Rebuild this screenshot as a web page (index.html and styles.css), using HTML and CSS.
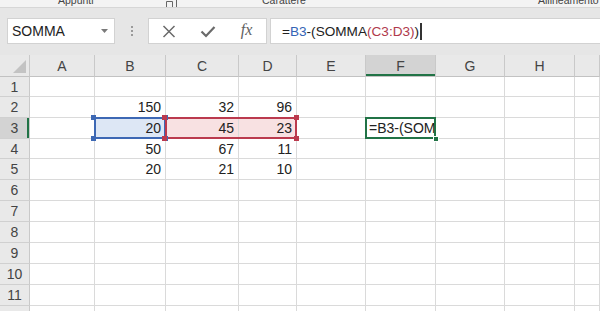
FILE: index.html
```html
<!DOCTYPE html>
<html>
<head>
    <meta charset="UTF-8">
    <title>Foglio1</title>
    <link rel="stylesheet" href="styles.css">
</head>
<body>

<div class="ribbon-groups">
    <span class="group-label g-clip">Appunti</span>
    <span class="launcher">
        <svg width="14" height="8" viewBox="0 0 14 8"><path d="M1.5 8V1.5H7.5V8M11.5 0V8" fill="none" stroke="#666" stroke-width="1"/></svg>
    </span>
    <span class="group-label g-font">Carattere</span>
    <span class="group-label g-align">Allineamento</span>
</div>

<div class="formula-bar">
    <div class="name-box">
        <span>SOMMA</span>
        <svg width="7" height="4" viewBox="0 0 7 4"><polygon points="0,0 7,0 3.5,4" fill="#7a7a7a"/></svg>
    </div>
    <div class="grip"><i></i><i></i><i></i></div>
    <div class="fx-buttons">
        <span class="fx-btn">
            <svg width="14" height="13" viewBox="0 0 14 13"><path d="M1.5 1L12.5 12M12.5 1L1.5 12" stroke="#6a6a6a" stroke-width="1.5" fill="none"/></svg>
        </span>
        <span class="fx-btn">
            <svg width="16" height="13" viewBox="0 0 16 13"><polyline points="1.5,6.5 6,11 14.5,2" stroke="#6a6a6a" stroke-width="2.2" fill="none"/></svg>
        </span>
        <span class="fx-btn fx">fx</span>
    </div>
    <div class="formula">=<span class="ref-b">B3</span>-(SOMMA<span class="ref-r">(C3:D3)</span>)<span class="caret"></span></div>
</div>

<div class="sheet">
    <div class="ch corner"><svg width="13" height="13" viewBox="0 0 13 13"><polygon points="13,0 13,13 0,13" fill="#c3c3c3"/></svg></div>
    <div class="ch">A</div><div class="ch">B</div><div class="ch">C</div><div class="ch">D</div><div class="ch">E</div><div class="ch on">F</div><div class="ch">G</div><div class="ch">H</div><div class="ch"></div>

    <div class="rh">1</div><div class="cell"></div><div class="cell"></div><div class="cell"></div><div class="cell"></div><div class="cell"></div><div class="cell"></div><div class="cell"></div><div class="cell"></div><div class="cell"></div>
    <div class="rh">2</div><div class="cell"></div><div class="cell">150</div><div class="cell">32</div><div class="cell">96</div><div class="cell"></div><div class="cell"></div><div class="cell"></div><div class="cell"></div><div class="cell"></div>
    <div class="rh on">3</div>
    <div class="cell"></div>
    <div class="cell sel-blue">20<i class="hd tl"></i><i class="hd tr"></i><i class="hd bl"></i><i class="hd br"></i></div>
    <div class="cell sel-red red-start">45<i class="hd tl"></i><i class="hd bl"></i></div>
    <div class="cell sel-red red-end">23<i class="hd tr"></i><i class="hd br"></i></div>
    <div class="cell"></div>
    <div class="cell active"><span class="edit">=B3-(SOMMA(C3:D3))</span><i class="fill-handle"></i></div>
    <div class="cell"></div><div class="cell"></div><div class="cell"></div>
    <div class="rh">4</div><div class="cell"></div><div class="cell">50</div><div class="cell">67</div><div class="cell">11</div><div class="cell"></div><div class="cell"></div><div class="cell"></div><div class="cell"></div><div class="cell"></div>
    <div class="rh">5</div><div class="cell"></div><div class="cell">20</div><div class="cell">21</div><div class="cell">10</div><div class="cell"></div><div class="cell"></div><div class="cell"></div><div class="cell"></div><div class="cell"></div>
    <div class="rh">6</div><div class="cell"></div><div class="cell"></div><div class="cell"></div><div class="cell"></div><div class="cell"></div><div class="cell"></div><div class="cell"></div><div class="cell"></div><div class="cell"></div>
    <div class="rh">7</div><div class="cell"></div><div class="cell"></div><div class="cell"></div><div class="cell"></div><div class="cell"></div><div class="cell"></div><div class="cell"></div><div class="cell"></div><div class="cell"></div>
    <div class="rh">8</div><div class="cell"></div><div class="cell"></div><div class="cell"></div><div class="cell"></div><div class="cell"></div><div class="cell"></div><div class="cell"></div><div class="cell"></div><div class="cell"></div>
    <div class="rh">9</div><div class="cell"></div><div class="cell"></div><div class="cell"></div><div class="cell"></div><div class="cell"></div><div class="cell"></div><div class="cell"></div><div class="cell"></div><div class="cell"></div>
    <div class="rh">10</div><div class="cell"></div><div class="cell"></div><div class="cell"></div><div class="cell"></div><div class="cell"></div><div class="cell"></div><div class="cell"></div><div class="cell"></div><div class="cell"></div>
    <div class="rh">11</div><div class="cell"></div><div class="cell"></div><div class="cell"></div><div class="cell"></div><div class="cell"></div><div class="cell"></div><div class="cell"></div><div class="cell"></div><div class="cell"></div>
    <div class="rh">12</div><div class="cell"></div><div class="cell"></div><div class="cell"></div><div class="cell"></div><div class="cell"></div><div class="cell"></div><div class="cell"></div><div class="cell"></div><div class="cell"></div>
</div>

</body>
</html>
```

FILE: styles.css
```css
* {
    box-sizing: border-box;
}

body {
    margin: 0;
    font-family: "Liberation Sans", Arial, sans-serif;
    background: #fff;
    overflow: hidden;
}

/* ribbon group names, cut off at the top */
.ribbon-groups {
    display: flex;
    height: 8px;
    overflow: hidden;
    background: #f3f3f3;
    border-bottom: 1px solid #d6d6d6;
    color: #444;
    font-size: 10.5px;
    line-height: 12px;
    white-space: nowrap;
}

.group-label {
    flex-shrink: 0;
    margin-top: -6px;
}

.g-clip {
    width: 40px;
    margin-left: 58px;
}

.launcher {
    flex-shrink: 0;
    width: 14px;
    margin-left: 67px;
}

.launcher svg {
    display: block;
}

.g-font {
    width: 50px;
    margin-left: 83px;
}

.g-align {
    margin-left: 226px;
}

/* formula bar */
.formula-bar {
    display: flex;
    align-items: flex-start;
    height: 47px;
    padding: 10px 0 0 7px;
    background: #e6e6e6;
}

.name-box {
    display: flex;
    align-items: center;
    justify-content: space-between;
    width: 108px;
    height: 26px;
    padding: 0 6px 0 4px;
    background: #fff;
    border: 1px solid #d2d2d2;
    color: #222;
    font-size: 14px;
}

.grip {
    display: flex;
    flex-direction: column;
    align-items: center;
    gap: 2px;
    width: 33px;
    padding-top: 8px;
}

.grip i {
    width: 2px;
    height: 2px;
    background: #9a9a9a;
}

.fx-buttons {
    display: flex;
    width: 119px;
    height: 26px;
    background: #fff;
    border: 1px solid #d2d2d2;
}

.fx-btn {
    display: flex;
    align-items: center;
    justify-content: center;
    flex: 1;
}

.fx-btn.fx {
    font-family: "Liberation Serif", "Times New Roman", serif;
    font-style: italic;
    font-size: 16px;
    color: #606060;
    padding-bottom: 2px;
}

.formula {
    display: flex;
    align-items: center;
    flex: 1;
    height: 26px;
    margin-left: 3px;
    padding-left: 11px;
    background: #fff;
    border: 1px solid #d2d2d2;
    border-right: none;
    color: #222;
    font-size: 13.6px;
    white-space: pre;
}

.ref-b {
    color: #3564b5;
}

.ref-r {
    color: #b03a4c;
}

.caret {
    width: 2px;
    height: 17px;
    margin-left: 1px;
    background: #333;
}

/* sheet grid */
.sheet {
    display: grid;
    grid-template-columns: 30px 65px 71px 73px 58px 69px 70px 69px 70px 1fr;
    grid-template-rows: 22px 20px 21px 21px 20px repeat(8, 21px);
    font-size: 14px;
    color: #222;
}

.ch,
.rh {
    display: flex;
    align-items: center;
    justify-content: center;
    background: #e9e9e9;
    color: #444;
    border-right: 1px solid #c9c9c9;
    border-bottom: 1px solid #c2c2c2;
}

.ch {
    padding-top: 1px;
}

.rh {
    border-bottom-color: #d0d0d0;
}

.corner {
    align-items: flex-end;
    justify-content: flex-end;
    padding: 0 3px 3px 0;
}

.corner svg {
    display: block;
}

.ch.on {
    background: #d3d3d3;
    box-shadow: inset 0 -2px #217346;
}

.rh.on {
    background: #d3d3d3;
    box-shadow: inset -2px 0 #217346;
}

.cell {
    display: flex;
    align-items: center;
    justify-content: flex-end;
    padding: 0 4px;
    border-right: 1px solid #dadada;
    border-bottom: 1px solid #dadada;
    white-space: nowrap;
}

/* selections drawn over the grid lines */
.sel-blue,
.sel-red,
.active {
    position: relative;
}

.sel-blue {
    background: #dde7f5;
}

.sel-red {
    background: #f8e1e2;
}

.sel-blue::after,
.sel-red::after,
.active::after {
    content: "";
    position: absolute;
    top: -1px;
    left: -1px;
    right: -1px;
    bottom: -1px;
    z-index: 2;
}

.sel-blue::after {
    border: 2px solid #3d68b4;
}

.sel-red::after {
    border: 2px solid #bb3a4e;
}

.red-start::after {
    border-right: none;
}

.red-end::after {
    border-left: none;
    left: 0;
}

.active::after {
    border: 2px solid #217346;
}

.hd {
    position: absolute;
    width: 5px;
    height: 5px;
    z-index: 3;
}

.sel-blue .hd {
    background: #3d68b4;
}

.sel-red .hd {
    background: #bb3a4e;
}

.hd.tl { top: -3px; left: -4px; }
.hd.tr { top: -3px; right: -3px; }
.hd.bl { bottom: -3px; left: -4px; }
.hd.br { bottom: -3px; right: -3px; }

.active {
    justify-content: flex-start;
    padding: 0;
}

.edit {
    overflow: hidden;
    min-width: 0;
    width: 100%;
    padding-left: 3px;
}

.fill-handle {
    position: absolute;
    right: -4px;
    bottom: -4px;
    width: 6px;
    height: 6px;
    background: #217346;
    border: 1px solid #fff;
    z-index: 3;
}
```
